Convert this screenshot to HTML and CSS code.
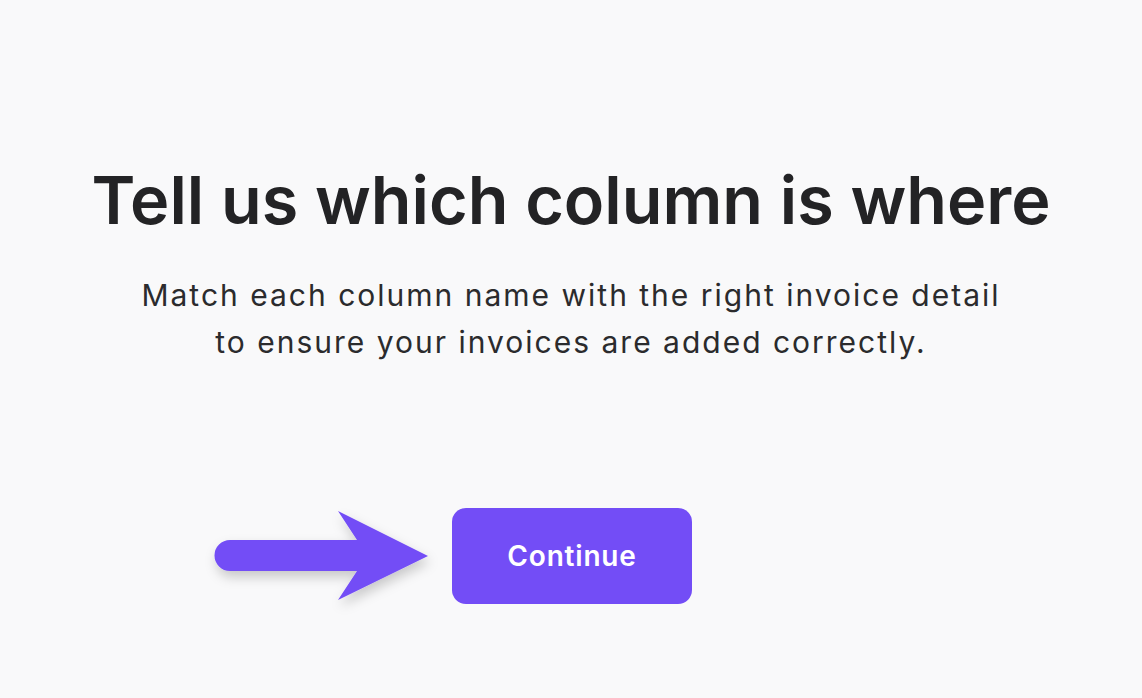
FILE: index.html
```html
<!DOCTYPE html>
<html lang="en">
<head>
  <meta charset="UTF-8" />
  <meta name="viewport" content="width=device-width, initial-scale=1.0" />
  <title>Map columns</title>
  <link rel="stylesheet" href="styles.css">
</head>
<body>

  <div class="container">
    <h1 class="title">Tell us which column is where</h1>
    <p class="subtitle">Match each column name with the right invoice detail<br>to ensure your invoices are added correctly.</p>

    <div class="actions">
      <!-- pointer arrow -->
      <svg class="pointer" width="230" height="110" viewBox="200 500 230 110" aria-hidden="true">
        <defs>
          <filter id="arrowShadow" x="-20%" y="-30%" width="140%" height="170%">
            <feDropShadow dx="2" dy="6" stdDeviation="6" flood-color="#000" flood-opacity="0.2" />
          </filter>
        </defs>
        <path filter="url(#arrowShadow)" fill="#734df6"
              d="M230 540 H357 L338 511 L428 556 L338 600 L357 571 H230 A15.5 15.5 0 0 1 230 540 Z" />
      </svg>
      <button class="btn-continue">Continue</button>
    </div>
  </div>

</body>
</html>
```

FILE: styles.css
```css
body {
  margin: 0;
  background: #f9f9fa;
  font-family: Inter, 'Noto Sans', sans-serif;
  color: #232325;
  min-height: 100vh;
}

.container {
  display: flex;
  flex-direction: column;
  align-items: center;
  padding-top: 160px;
}

.title {
  margin: 0;
  font-size: 66.5px;
  font-weight: 600;
  line-height: 80px;
  color: #232325;
}

.subtitle {
  margin: 32px 0 0;
  font-size: 30px;
  font-weight: 400;
  line-height: 47px;
  letter-spacing: 2px;
  text-align: center;
  color: #2b2b2d;
}

.actions {
  position: relative;
  margin-top: 142px;
  margin-left: 2px;
}

.pointer {
  position: absolute;
  right: 100%;
  top: -8px;
  margin-right: 22px;
  overflow: visible;
}

.btn-continue {
  width: 240px;
  height: 96px;
  border: none;
  border-radius: 14px;
  background: #734df6;
  color: #fff;
  font-family: inherit;
  font-size: 28px;
  font-weight: 600;
  letter-spacing: 0.8px;
  cursor: pointer;
}

.btn-continue:hover {
  background: #6340e0;
}
```
